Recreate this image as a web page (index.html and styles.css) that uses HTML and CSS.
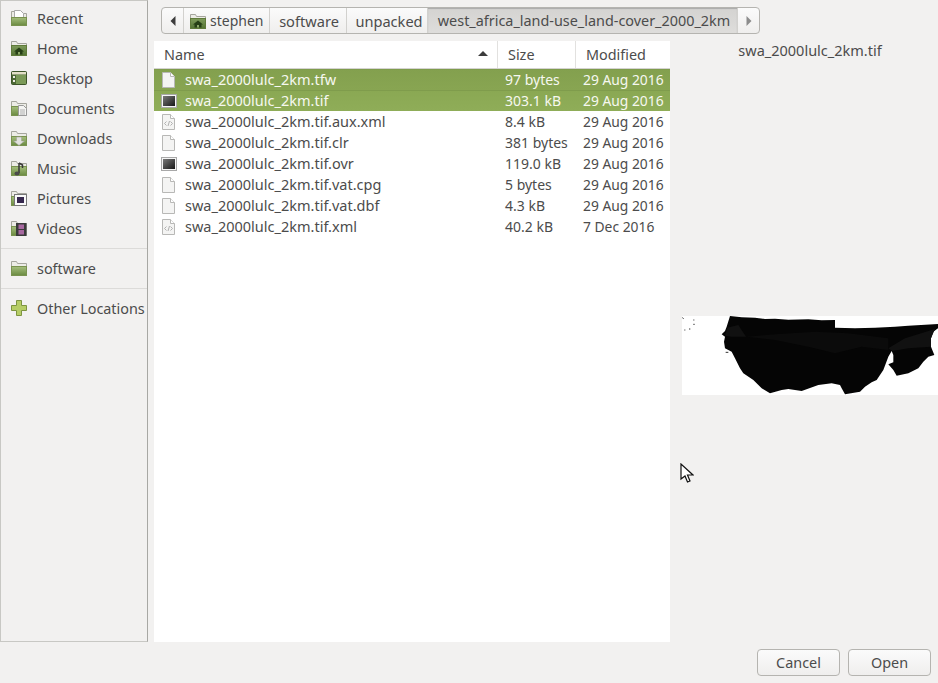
FILE: index.html
```html
<!DOCTYPE html>
<html lang="en">
<head>
<meta charset="utf-8">
<title>Open File</title>
<link rel="stylesheet" href="styles.css">
</head>
<body>
<svg class="defs" width="0" height="0" aria-hidden="true">
  <defs>
    <linearGradient id="fg" x1="0" y1="0" x2="0" y2="1"><stop offset="0" stop-color="#a6bf7e"/><stop offset="1" stop-color="#6a8a40"/></linearGradient>
    <linearGradient id="dg" x1="0" y1="0" x2="0" y2="1"><stop offset="0" stop-color="#7f9c5b"/><stop offset="1" stop-color="#527233"/></linearGradient>
    <linearGradient id="tg" x1="0" y1="0" x2="1" y2="1"><stop offset="0" stop-color="#7a7a7a"/><stop offset="1" stop-color="#161616"/></linearGradient>
    <symbol id="folder" viewBox="0 0 16 16"><path d="M.5 1.500h5l1 2h9v12H.5z" fill="#ecece6" stroke="#a5a59d"/><rect x=".5" y="6.500" width="15" height="9" fill="url(#fg)" stroke="#79924f"/></symbol>
    <symbol id="home" viewBox="0 0 16 16"><path d="M.5 1.500h5l1 2h9v12H.5z" fill="#ecece6" stroke="#a5a59d"/><rect x=".5" y="5.500" width="15" height="10" fill="url(#dg)" stroke="#5f7a3a"/><path d="M3 11.500 8 7.500l5 4h-1.500v3h-7v-3z" fill="#263f16"/><rect x="7" y="12" width="2" height="2.500" fill="#8ca868"/></symbol>
    <symbol id="recent" viewBox="0 0 16 16"><path d="M.5 1.500h5l1 2h9v12H.5z" fill="#ecece6" stroke="#a5a59d"/><path d="M3.500.5h6l3 3v4h-9z" fill="#fff" stroke="#aaa"/><rect x=".5" y="7.500" width="15" height="8" fill="url(#fg)" stroke="#79924f"/></symbol>
    <symbol id="desktop" viewBox="0 0 16 16"><rect x=".5" y="1.500" width="15" height="13" rx="1" fill="#4d6a36" stroke="#3d5529"/><rect x="1" y="2" width="14" height="2.500" fill="#e3e0c8"/><rect x="5" y="5" width="10" height="9" fill="#7b9a58"/><rect x="2" y="6" width="2" height="2" fill="#efefe6"/><rect x="2" y="10" width="2" height="2" fill="#efefe6"/></symbol>
    <symbol id="documents" viewBox="0 0 16 16"><path d="M.5 1.500h5l1 2h9v12H.5z" fill="#ecece6" stroke="#a5a59d"/><rect x=".5" y="6.500" width="8" height="9" fill="url(#fg)" stroke="#79924f"/><path d="M7.500 5.500h5l3 3v7h-8z" fill="#f4f4f2" stroke="#999"/><path d="M9 10h5M9 12h5M9 14h5" stroke="#b0b0b0"/></symbol>
    <symbol id="downloads" viewBox="0 0 16 16"><use href="#folder"/><path d="M5.500 7h5v4h3L8 15.500 2.500 11h3z" fill="#e2e2de" stroke="#a2a29c" stroke-width=".6"/></symbol>
    <symbol id="music" viewBox="0 0 16 16"><use href="#folder"/><path d="M8 3v10M8 3l3.500 2v3" stroke="#383838" stroke-width="1.500" fill="none"/><ellipse cx="6" cy="13.500" rx="2.500" ry="2" fill="#4a4a4a"/></symbol>
    <symbol id="pictures" viewBox="0 0 16 16"><path d="M.5 1.500h5l1 2h9v12H.5z" fill="#ecece6" stroke="#a5a59d"/><rect x=".5" y="6.500" width="5" height="9" fill="url(#fg)" stroke="#79924f"/><rect x="3.500" y="4.500" width="12" height="11" fill="#fafafa" stroke="#777"/><rect x="6" y="7" width="7" height="6" fill="#36284e"/></symbol>
    <symbol id="videos" viewBox="0 0 16 16"><path d="M.5 1.500h5l1 2h9v12H.5z" fill="#ecece6" stroke="#a5a59d"/><rect x=".5" y="6.500" width="6" height="9" fill="url(#fg)" stroke="#79924f"/><rect x="5" y="3" width="10.500" height="13" fill="#3a3a3a"/><rect x="7.500" y="4.500" width="5.500" height="4.500" fill="#a768a0"/><rect x="7.500" y="10" width="5.500" height="4.500" fill="#a768a0"/></symbol>
    <symbol id="plus" viewBox="0 0 16 16"><path d="M5.500.5h5v5h5v5h-5v5h-5v-5h-5v-5h5z" fill="#b6cd66" stroke="#7d9440"/></symbol>
    <symbol id="doc" viewBox="0 0 16 16"><path d="M1.500.5h8l4 4v11h-12z" fill="#f4f4f3" stroke="#b8b8b6"/><path d="M9.500.5v4h4" fill="#fff" stroke="#b8b8b6"/></symbol>
    <symbol id="xml" viewBox="0 0 16 16"><use href="#doc"/><path d="M5.500 7.500 3.500 9.500l2 2M9.500 7.500l2 2-2 2M8.500 7 7 12" stroke="#b0b0b0" fill="none"/></symbol>
    <symbol id="img" viewBox="0 0 16 16"><rect x=".5" y="1.500" width="15" height="13" fill="#f5f5f5" stroke="#a8a8a8"/><rect x="2" y="3" width="12" height="10" fill="url(#tg)"/></symbol>
  </defs>
</svg>
<div class="window">
  <div class="main">
    <nav class="sidebar">
      <div class="place"><svg class="ic"><use href="#recent"/></svg><span>Recent</span></div>
      <div class="place"><svg class="ic"><use href="#home"/></svg><span>Home</span></div>
      <div class="place"><svg class="ic"><use href="#desktop"/></svg><span>Desktop</span></div>
      <div class="place"><svg class="ic"><use href="#documents"/></svg><span>Documents</span></div>
      <div class="place"><svg class="ic"><use href="#downloads"/></svg><span>Downloads</span></div>
      <div class="place"><svg class="ic"><use href="#music"/></svg><span>Music</span></div>
      <div class="place"><svg class="ic"><use href="#pictures"/></svg><span>Pictures</span></div>
      <div class="place"><svg class="ic"><use href="#videos"/></svg><span>Videos</span></div>
      <hr class="sep">
      <div class="place"><svg class="ic"><use href="#folder"/></svg><span>software</span></div>
      <hr class="sep">
      <div class="place"><svg class="ic"><use href="#plus"/></svg><span>Other Locations</span></div>
    </nav>
    <div class="content">
      <div class="pathbar">
        <div class="crumb arrow"><svg width="6" height="10" viewBox="0 0 6 10"><path d="M5.500 0v10L.5 5z" fill="#3c3c3c"/></svg></div>
        <div class="crumb c-home"><svg class="ic"><use href="#home"/></svg><span class="stephen">stephen</span></div>
        <div class="crumb c-soft">software</div>
        <div class="crumb c-unp">unpacked</div>
        <div class="crumb current">west_africa_land-use_land-cover_2000_2km</div>
        <div class="crumb arrow end"><svg width="6" height="10" viewBox="0 0 6 10"><path d="M.5 0v10L5.500 5z" fill="#8c8c8c"/></svg></div>
      </div>
      <div class="panes">
        <div class="files">
          <div class="row head">
            <div class="col-name">Name<svg class="sort" width="10" height="5" viewBox="0 0 10 5"><path d="M5 0l5 5H0z" fill="#3c3c3c"/></svg></div>
            <div class="col-size">Size</div>
            <div class="col-mod">Modified</div>
          </div>
          <div class="row file sel first"><svg class="ic"><use href="#doc"/></svg><span class="fname">swa_2000lulc_2km.tfw</span><span class="fsize">97 bytes</span><span class="fdate">29 Aug 2016</span></div>
          <div class="row file sel"><svg class="ic"><use href="#img"/></svg><span class="fname">swa_2000lulc_2km.tif</span><span class="fsize">303.1 kB</span><span class="fdate">29 Aug 2016</span></div>
          <div class="row file"><svg class="ic"><use href="#xml"/></svg><span class="fname">swa_2000lulc_2km.tif.aux.xml</span><span class="fsize">8.4 kB</span><span class="fdate">29 Aug 2016</span></div>
          <div class="row file"><svg class="ic"><use href="#doc"/></svg><span class="fname">swa_2000lulc_2km.tif.clr</span><span class="fsize">381 bytes</span><span class="fdate">29 Aug 2016</span></div>
          <div class="row file"><svg class="ic"><use href="#img"/></svg><span class="fname">swa_2000lulc_2km.tif.ovr</span><span class="fsize">119.0 kB</span><span class="fdate">29 Aug 2016</span></div>
          <div class="row file"><svg class="ic"><use href="#doc"/></svg><span class="fname">swa_2000lulc_2km.tif.vat.cpg</span><span class="fsize">5 bytes</span><span class="fdate">29 Aug 2016</span></div>
          <div class="row file"><svg class="ic"><use href="#doc"/></svg><span class="fname">swa_2000lulc_2km.tif.vat.dbf</span><span class="fsize">4.3 kB</span><span class="fdate">29 Aug 2016</span></div>
          <div class="row file"><svg class="ic"><use href="#xml"/></svg><span class="fname">swa_2000lulc_2km.tif.xml</span><span class="fsize">40.2 kB</span><span class="fdate">7 Dec 2016</span></div>
        </div>
        <aside class="preview">
          <div class="ptitle">swa_2000lulc_2km.tif</div>
          <svg class="map" viewBox="21 33 768 237" width="256" height="79">
            <rect x="21" y="33" width="768" height="237" fill="#fff"/>
            <path d="M165 33 200 37 240 38 270 42 300 41 340 44 400 43 440 46 480 45 480 68 540 70 600 68 660 65 700 62 789 57 789 70 775 80 768 100 768 125 778 150 760 155 745 170 730 190 700 205 665 212 655 195 640 178 655 172 655 150 650 138 640 155 625 195 605 225 590 232 570 245 555 260 510 268 500 250 495 240 470 235 430 240 380 258 340 252 320 255 285 265 260 250 235 225 205 205 195 190 180 160 170 140 150 130 147 110 150 95 140 88 150 78 155 65z" fill="#050505"/>
            <path d="M157 68 190 60 213 95 170 95 150 92z" fill="#111"/>
            <path d="M640 130 690 100 780 72 768 100 768 125 700 130 652 138z" fill="#111"/>
            <path d="M215 95 300 88 420 80 520 85 640 100 640 135 560 125 480 145 400 125 300 105z" fill="#0b0b0b"/>
            <path d="M22 38l4 3M55 45h3M55 58h4M28 75h3M42 72h4M152 142h8" stroke="#333" stroke-width="3"/>
          </svg>
        </aside>
      </div>
    </div>
  </div>
  <div class="actions">
    <button class="btn" type="button">Cancel</button>
    <button class="btn" type="button">Open</button>
  </div>
  <svg class="cursor" width="14" height="21" viewBox="0 0 14 21"><path d="M1 1v15l4-3 2.500 6 2.500-1-2.500-6H13z" fill="#fff" stroke="#111" stroke-width="1.200"/></svg>
</div>
</body>
</html>
```
FILE: styles.css
```css
* { box-sizing: border-box; }
html, body { margin: 0; padding: 0; }
body {
  width: 938px;
  height: 683px;
  overflow: hidden;
  background: #f2f1f0;
  color: #4c4c4c;
  font-family: "Noto Sans", "Open Sans", sans-serif;
  font-size: 14.4px;
}
.defs { position: absolute; }
.window { position: relative; display: flex; flex-direction: column; width: 938px; height: 683px; overflow: hidden; }
.main { display: flex; height: 642px; }
.sidebar {
  width: 148px;
  flex: none;
  padding-top: 4px;
  background: #f2f1f0;
  border-right: 1px solid #a8a8a4;
  border-left: 1px solid #c8c8c4;
  border-top: 1px solid #c8c8c4;
  border-bottom: 1px solid #c8c8c4;
  overflow: hidden;
}
.place { display: flex; align-items: center; height: 30px; padding-left: 10px; gap: 10px; white-space: nowrap; }
.place:first-child { margin-top: -2px; }
.ic { width: 16px; height: 16px; flex: none; }
.sep { height: 1px; margin: 5px 0 4px; border: 0; background: #dcdbd9; }
.content { flex: 1; display: flex; flex-direction: column; min-width: 0; padding-left: 6px; }
.pathbar {
  display: flex;
  align-self: flex-start;
  width: 599px;
  height: 27px;
  margin: 7px 0 7px 7px;
  border: 1px solid #b5b4b0;
  border-radius: 4px;
  background: linear-gradient(#fbfbfb, #efeeed);
  overflow: hidden;
}
.crumb { display: flex; align-items: center; justify-content: center; height: 100%; border-right: 1px solid #d2d1ce; white-space: nowrap; flex: none; }
.arrow { width: 22px; }
.end { border-right: 0; flex: 1; }
.c-home { width: 86px; gap: 4px; justify-content: flex-start; padding-left: 6px; }
.stephen { font-size: 14px; }
.c-soft { width: 77px; padding-left: 2px; font-size: 14.6px; }
.c-unp { width: 81px; padding-left: 4px; font-size: 14.6px; }
.current { width: 310px; padding-left: 3px; background: linear-gradient(#d4d3d1, #dedddb); box-shadow: inset 0 1px 1px #aaa; }
.panes { flex: 1; display: flex; min-height: 0; }
.files { width: 516px; flex: none; background: #fff; }
.row { display: flex; align-items: center; }
.head { height: 28px; border-bottom: 1px solid #d4d3d0; }
.head > div { position: relative; height: 100%; display: flex; align-items: center; border-right: 1px solid #e2e1df; }
.col-name { width: 344px; padding-left: 10px; }
.col-size { width: 78px; padding-left: 10px; }
.col-mod { width: 94px; padding-left: 10px; border-right: 0 !important; }
.sort { position: absolute; right: 9px; top: 10px; }
.file { height: 21px; padding-left: 7px; }
.file .ic { margin-right: 8px; }
.fname { width: 320px; flex: none; font-size: 14.5px; padding-bottom: 2px; }
.fsize { width: 78px; flex: none; font-size: 14px; }
.fdate { flex: none; font-size: 13.85px; }
.sel { background: linear-gradient(#8aa853, #8fad58); color: #fff; box-shadow: inset 0 1px 0 #7f9c4c; }
.sel.first { background: linear-gradient(#83a04e, #88a552); }
.sel .fname, .sel .fsize, .sel .fdate { color: #f6f8f0; }
.preview { flex: 1; min-width: 0; overflow: hidden; }
.ptitle { text-align: center; margin-top: -2px; padding-left: 12px; height: 22px; line-height: 22px; font-size: 14.5px; }
.map { display: block; margin: 255px 0 0 12px; filter: blur(.35px); }
.actions { flex: 1; display: flex; justify-content: flex-end; align-items: flex-start; gap: 8px; padding: 7px 7px 0 0; }
.btn {
  height: 27px;
  width: 83px;
  border: 1px solid #b5b4b0;
  border-radius: 4px;
  background: linear-gradient(#fbfbfb, #efeeed);
  color: #4c4c4c;
  font: inherit;
  padding: 0;
}
.cursor { position: absolute; left: 680px; top: 463px; }
```
